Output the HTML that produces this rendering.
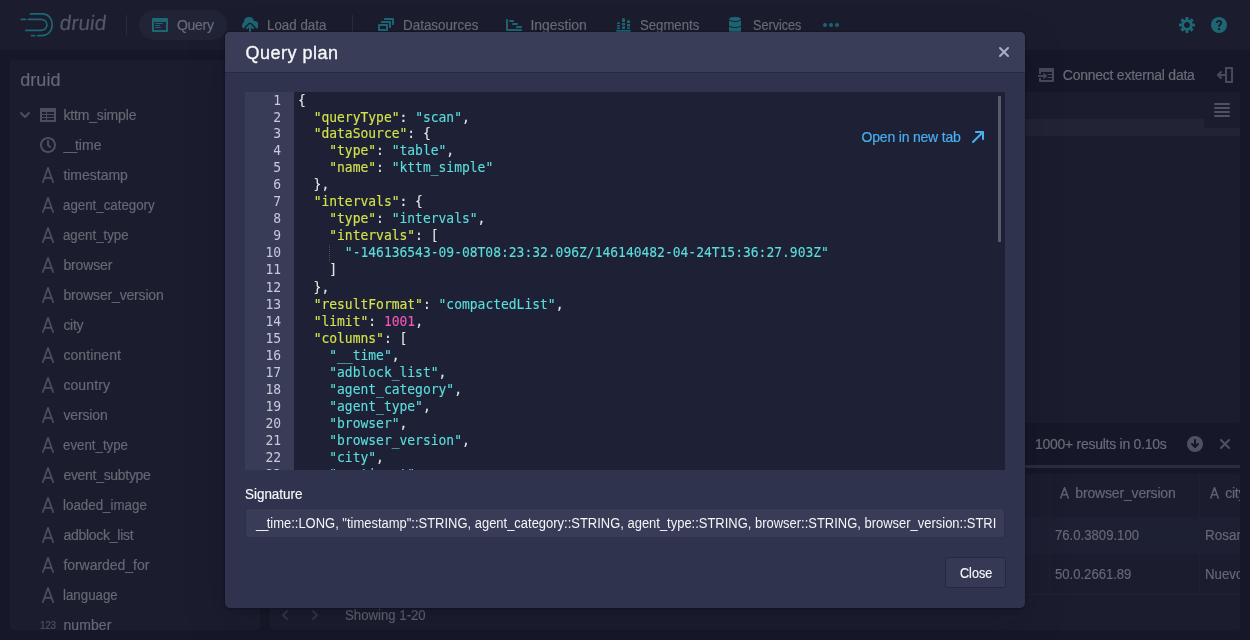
<!DOCTYPE html>
<html lang="en">
<head>
<meta charset="utf-8">
<title>Apache Druid</title>
<style>
*{box-sizing:border-box;margin:0;padding:0}
html,body{width:1250px;height:640px;overflow:hidden;background:#161829;font-family:"Liberation Sans",sans-serif;font-size:14px;color:#6c6e7c}
body{position:relative}
#app{position:absolute;left:0;top:0;width:1250px;height:640px;overflow:hidden;will-change:transform}
.abs{position:absolute}
.hdr{position:absolute;left:0;top:0;width:1250px;height:50px;background:#1b1c2e}
.t{position:absolute;font-family:"Liberation Sans",sans-serif;font-size:14px;line-height:18px;color:#6b6c78;white-space:nowrap;-webkit-text-stroke:0.18px}
.pill{position:absolute;left:139px;top:10px;width:88px;height:30px;border-radius:15px;background:#212337}
.vdiv{position:absolute;top:15px;width:1px;height:20px;background:#2a2c3f}
.panel{position:absolute;background:#1b1c2e;border-radius:3px}
.modal{position:absolute;left:225px;top:32px;width:800px;height:576px;background:#2f334d;border-radius:5px;overflow:hidden}
.mshadow{position:absolute;left:225px;top:32px;width:800px;height:576px;border-radius:5px;box-shadow:0 0 0 1px rgba(13,14,26,.25),0 2px 5px rgba(13,14,26,.35),0 14px 40px 4px rgba(13,14,26,.13)}
.mh{position:absolute;left:0;top:0;width:800px;height:41px;background:#3a3d58;border-bottom:1px solid #272a41}
.code{position:absolute;left:20px;top:60px;width:760px;height:378px;background:#1e2136;overflow:hidden;font-family:"DejaVu Sans Mono","Liberation Mono",monospace;font-size:13px;line-height:17px;letter-spacing:-0.02px}
.gutbg{position:absolute;left:0;top:0;width:49px;height:378px;background:#393c57}
.gut{position:absolute;left:0;top:-0.600px;width:49px;color:#c6cad9;text-align:right;padding-right:13px;white-space:pre;line-height:15.044px;transform:scaleY(1.13);transform-origin:0 0}
.src{position:absolute;left:53px;top:-0.600px;white-space:pre;color:#dcebe4;line-height:15.044px;transform:scaleY(1.13);transform-origin:0 0}
.k{color:#d2e34a}.s{color:#5bdedb}.n{color:#f656b4}
.src{-webkit-text-stroke:0.12px}
.guide{position:absolute;left:84px;top:153px;width:1px;height:17px;background:repeating-linear-gradient(#4a4d63 0 1px,transparent 1px 2px)}
.sb{position:absolute;left:753px;top:4px;width:3px;height:146px;background:#5a5b68}
.inp{position:absolute;left:20px;top:476px;width:760px;height:30px;background:#383c56;border:1px solid #2c3048;border-radius:3px}
.inp div{position:absolute;left:0;top:5px;width:750px;height:18px;overflow:hidden}
.inp div>span{position:absolute;left:10.13px;top:0;font-size:14px;line-height:18px;color:#f3f5f9;white-space:nowrap;transform-origin:0 0;transform:scaleX(0.9259)}
.btn{position:absolute;left:720px;top:525px;width:61px;height:31px;background:#353953;border:1px solid #252840;border-radius:3px}
.row1{position:absolute;left:0;top:43px;width:970px;height:37px;background:#1d1f32}
.cb{position:absolute;top:0;width:1px;height:120px;background:#1e2033}
</style>
</head>
<body>
<div id="app">
<!-- header -->
<div class="hdr">
  <div class="pill"></div>
  <div class="vdiv" style="left:126px"></div>
  <div class="vdiv" style="left:352px"></div>
  <svg class="abs" style="left:18px;top:10px" width="38" height="30" viewBox="0 0 38 30" fill="none" stroke="#1d6775" stroke-width="1.700" stroke-linecap="round"><path d="M12.300 3.900H24.500C30.500 3.900 34.200 8.800 34.200 14.700C34.200 20.800 29.800 25.700 24 25.700H19.700"/><path d="M13.400 25.700H16.800"/><path d="M3.300 9.400H7.500"/><path d="M10.200 9.400H23C26.500 9.400 28.900 11.800 28.900 14.900C28.900 18 26.300 20.400 23 20.400H7.800"/></svg>
  <div class="t" style="left:59.2px;top:10px;font-size:20.8px;line-height:26px;letter-spacing:0.03px;color:#555766;transform:skewX(-7deg);transform-origin:0 21px;">druid</div>
  <svg class="abs" style="left:152px;top:17px" width="16" height="16" viewBox="0 0 16 16" fill="#1d6775"><path fill-rule="evenodd" d="M3.5 7h7c.28 0 .5-.22.5-.5s-.22-.5-.5-.5h-7c-.28 0-.5.22-.5.5s.22.5.5.5zM15 1H1c-.55 0-1 .45-1 1v12c0 .55.45 1 1 1h14c.55 0 1-.45 1-1V2c0-.55-.45-1-1-1zm-1 12H2V5h12v8zM3.500 9h4c.28 0 .5-.22.5-.5S7.780 8 7.500 8h-4c-.28 0-.5.22-.5.5s.22.5.5.5zm0 2h5c.28 0 .5-.22.5-.5s-.22-.5-.5-.5h-5c-.28 0-.5.22-.5.5s.22.5.5.5z"/></svg>
  <div class="t" style="left:177px;top:16px;font-size:14px;line-height:18px;letter-spacing:-0.281px;">Query</div>
  <svg class="abs" style="left:242px;top:17px" width="16" height="16" viewBox="0 0 16 16" fill="#1d6775"><path fill-rule="evenodd" d="M8.710 7.290C8.530 7.110 8.280 7 8 7s-.53.110-.71.290l-3 3a1.003 1.003 0 001.420 1.420L7 10.410V15c0 .55.450 1 1 1s1-.45 1-1v-4.590l1.290 1.290c.18.190.43.300.71.300a1.003 1.003 0 00.710-1.710l-3-3zM12 4c-.03 0-.07 0-.1.010A5 5 0 002 5c0 .110.010.220.020.330A3.510 3.510 0 000 8.500c0 1.430.860 2.660 2.090 3.200.010-.88.360-1.690.960-2.320l2.990-2.990C6.400 6.030 6.900 5.800 7.450 5.800h1.100c.55 0 1.050.22 1.410.59l3 3c.6.6.95 1.430.96 2.350A4.002 4.002 0 0012 4z"/></svg>
  <div class="t" style="left:266.65px;top:16px;font-size:14px;line-height:18px;transform:scaleX(0.9529);transform-origin:0 0;">Load data</div>
  <svg class="abs" style="left:378px;top:17px" width="16" height="16" viewBox="0 0 16 16" fill="#1d6775"><path fill-rule="evenodd" d="M12 3.980H4c-.55 0-1 .45-1 1v1h8v5h1c.55 0 1-.45 1-1v-5c0-.55-.45-1-1-1zm3-3H7c-.55 0-1 .45-1 1v1h8v5h1c.55 0 1-.45 1-1v-5c0-.55-.45-1-1-1zm-6 6H1c-.55 0-1 .45-1 1v5c0 .55.45 1 1 1h8c.55 0 1-.45 1-1v-5c0-.55-.45-1-1-1zm-1 5H2v-3h6v3z"/></svg>
  <div class="t" style="left:402.64px;top:16px;font-size:14px;line-height:18px;transform:scaleX(0.9589);transform-origin:0 0;">Datasources</div>
  <svg class="abs" style="left:506px;top:17px" width="16" height="16" viewBox="0 0 16 16" fill="#1d6775"><path fill-rule="evenodd" d="M4 5h3c.55 0 1-.45 1-1s-.45-1-1-1H4c-.55 0-1 .45-1 1s.45 1 1 1zm3 1c-.55 0-1 .45-1 1s.45 1 1 1h4c.55 0 1-.45 1-1s-.45-1-1-1H7zm8 6H2V3c0-.55-.45-1-1-1s-1 .45-1 1v10c0 .55.450 1 1 1h14c.55 0 1-.45 1-1s-.45-1-1-1zm-4-3c-.55 0-1 .45-1 1s.45 1 1 1h4c.55 0 1-.45 1-1s-.45-1-1-1h-4z"/></svg>
  <div class="t" style="left:530.5px;top:16px;font-size:14px;line-height:18px;letter-spacing:-0.067px;">Ingestion</div>
  <svg class="abs" style="left:616px;top:17px" width="16" height="16" viewBox="0 0 16 16" fill="#1d6775"><path d="M1 6.500A1.500 1.500 0 014 6.500V7H1zM1 8h3v1.500H1zM1 10.500h3V12H1z"/><path d="M6 2.500A1.500 1.500 0 019 2.500V5H6zM6 6h3v2.500H6zM6 9.500h3V12H6z"/><path d="M11 4.500A1.500 1.500 0 0114 4.500V6H11zM11 7h3v2.500h-3zM11 10.500h3V12h-3z"/><rect x="0" y="13" width="15" height="2" rx="1"/></svg>
  <div class="t" style="left:639.8px;top:16px;font-size:14px;line-height:18px;transform:scaleX(0.9392);transform-origin:0 0;">Segments</div>
  <svg class="abs" style="left:727px;top:17px" width="16" height="16" viewBox="0 0 16 16" fill="#1d6775"><path fill-rule="evenodd" d="M8 4c3.310 0 6-.9 6-2s-2.690-2-6-2C4.680 0 2 .9 2 2s2.680 2 6 2zm-6-.48V8c0 1.100 2.690 2 6 2s6-.9 6-2V3.520C12.780 4.400 10.560 5 8 5s-4.780-.6-6-1.480zm0 6V14c0 1.100 2.690 2 6 2s6-.9 6-2V9.520C12.780 10.400 10.560 11 8 11s-4.780-.6-6-1.480z"/></svg>
  <div class="t" style="left:752.6px;top:16px;font-size:14px;line-height:18px;transform:scaleX(0.9016);transform-origin:0 0;">Services</div>
  <svg class="abs" style="left:823px;top:17px" width="16" height="16" viewBox="0 0 16 16" fill="#1d6775"><circle cx="2" cy="8" r="2"/><circle cx="8" cy="8" r="2"/><circle cx="14" cy="8" r="2"/></svg>
  <svg class="abs" style="left:1179px;top:17px" width="16" height="16" viewBox="0 0 16 16" fill="#1d6775"><path fill-rule="evenodd" d="M15.190 6.390h-1.850c-.11-.37-.27-.71-.45-1.040l1.360-1.360c.31-.31.310-.82 0-1.130l-1.130-1.130a.803.803 0 00-1.130 0l-1.360 1.360c-.33-.17-.67-.33-1.040-.44V.790c0-.44-.36-.8-.8-.8h-1.600c-.44 0-.8.360-.8.800v1.860c-.39.120-.75.280-1.100.47l-1.300-1.300c-.3-.3-.79-.3-1.090 0L1.820 2.910c-.3.300-.3.790 0 1.090l1.300 1.300c-.2.340-.36.700-.48 1.090H.8c-.44 0-.8.360-.8.800v1.600c0 .44.360.8.800.8h1.850c.11.370.27.710.45 1.040l-1.360 1.360c-.31.310-.31.820 0 1.130l1.130 1.130c.31.310.82.310 1.130 0l1.360-1.360c.33.180.67.330 1.040.440v1.860c0 .44.360.8.800.8h1.600c.44 0 .8-.36.800-.8v-1.860c.39-.12.750-.28 1.100-.47l1.300 1.300c.3.300.79.300 1.090 0l1.090-1.090c.3-.3.300-.79 0-1.090l-1.300-1.300c.19-.35.360-.71.480-1.100h1.850c.44 0 .8-.36.800-.8v-1.600a.816.816 0 00-.82-.79zM8 10.990c-1.660 0-3-1.340-3-3s1.340-3 3-3 3 1.340 3 3-1.340 3-3 3z"/></svg>
  <svg class="abs" style="left:1211px;top:17px" width="16" height="16" viewBox="0 0 16 16" fill="#1d6775"><circle cx="8" cy="8" r="8"/><path d="M5.900 6.100C5.900 4.600 6.900 3.900 8.100 3.900C9.400 3.900 10.200 4.700 10.200 5.800C10.200 7.500 8 7.600 8 9.700" fill="none" stroke="#1b1c2e" stroke-width="1.900"/><rect x="7" y="11" width="2" height="2" fill="#1b1c2e"/></svg>
</div>

<!-- sidebar -->
<div class="panel side" style="left:10px;top:60px;width:250px;height:570px;overflow:hidden">
  <div class="t" style="left:10.3px;top:8px;font-size:18px;line-height:24px;letter-spacing:0.021px;color:#676874;">druid</div>
  <svg class="abs" style="left:7px;top:47px" width="16" height="16" viewBox="0 0 16 16" fill="#4d4f60"><path d="M12 5c-.28 0-.53.110-.71.290L8 8.590l-3.290-3.300a1.003 1.003 0 00-1.420 1.420l4 4c.18.180.43.290.71.290s.53-.11.710-.29l4-4A1.003 1.003 0 0012 5z"/></svg>
  <svg class="abs" style="left:30px;top:47px" width="16" height="16" viewBox="0 0 16 16" fill="#4d4f60"><path fill-rule="evenodd" d="M15 1H1c-.55 0-1 .45-1 1v12c0 .55.450 1 1 1h14c.55 0 1-.45 1-1V2c0-.55-.45-1-1-1zM6 13H2v-2h4v2zm0-3H2V8h4v2zm0-3H2V5h4v2zm8 6H7v-2h7v2zm0-3H7V8h7v2zm0-3H7V5h7v2z"/></svg>
  <div class="t" style="left:53.4px;top:46px;font-size:14px;line-height:18px;letter-spacing:-0.16px;color:#676874;">kttm_simple</div>
  <div class="t" style="left:53.4px;top:76px;color:#676874"><span style="letter-spacing:-2px">__</span>time</div>
  <svg class="abs" style="left:30px;top:77px" width="16" height="16" viewBox="0 0 16 16" fill="#4d4f60"><path fill-rule="evenodd" d="M9 7.590V4c0-.55-.45-1-1-1s-1 .45-1 1v4c0 .28.110.53.290.71l2 2a1.003 1.003 0 001.420-1.420L9 7.590zM8 0C3.580 0 0 3.580 0 8s3.580 8 8 8 8-3.580 8-8-3.580-8-8-8zm0 14c-3.310 0-6-2.690-6-6s2.690-6 6-6 6 2.690 6 6-2.690 6-6 6z"/></svg>
  <div class="t" style="left:53.4px;top:106px;font-size:14px;line-height:18px;letter-spacing:-0.011px;color:#676874;">timestamp</div>
  <svg class="abs" style="left:32px;top:107px" width="12" height="16" viewBox="0 0 12 16" fill="none" stroke="#4d4f60" stroke-width="1.7" stroke-linecap="round" stroke-linejoin="round"><path d="M0.800 15.200L6 0.900L11.200 15.200M2.700 10.800H9.300"/></svg>
  <div class="t" style="left:53.4px;top:136px;font-size:14px;line-height:18px;transform:scaleX(0.9501);transform-origin:0 0;color:#676874;">agent_category</div>
  <svg class="abs" style="left:32px;top:137px" width="12" height="16" viewBox="0 0 12 16" fill="none" stroke="#4d4f60" stroke-width="1.7" stroke-linecap="round" stroke-linejoin="round"><path d="M0.800 15.200L6 0.900L11.200 15.200M2.700 10.800H9.300"/></svg>
  <div class="t" style="left:53.4px;top:166px;font-size:14px;line-height:18px;transform:scaleX(0.9468);transform-origin:0 0;color:#676874;">agent_type</div>
  <svg class="abs" style="left:32px;top:167px" width="12" height="16" viewBox="0 0 12 16" fill="none" stroke="#4d4f60" stroke-width="1.7" stroke-linecap="round" stroke-linejoin="round"><path d="M0.800 15.200L6 0.900L11.200 15.200M2.700 10.800H9.300"/></svg>
  <div class="t" style="left:53.4px;top:196px;font-size:14px;line-height:18px;letter-spacing:-0.138px;color:#676874;">browser</div>
  <svg class="abs" style="left:32px;top:197px" width="12" height="16" viewBox="0 0 12 16" fill="none" stroke="#4d4f60" stroke-width="1.7" stroke-linecap="round" stroke-linejoin="round"><path d="M0.800 15.200L6 0.900L11.200 15.200M2.700 10.800H9.300"/></svg>
  <div class="t" style="left:53.4px;top:226px;font-size:14px;line-height:18px;letter-spacing:-0.166px;color:#676874;">browser_version</div>
  <svg class="abs" style="left:32px;top:227px" width="12" height="16" viewBox="0 0 12 16" fill="none" stroke="#4d4f60" stroke-width="1.7" stroke-linecap="round" stroke-linejoin="round"><path d="M0.800 15.200L6 0.900L11.200 15.200M2.700 10.800H9.300"/></svg>
  <div class="t" style="left:53.4px;top:256px;font-size:14px;line-height:18px;letter-spacing:-0.3px;color:#676874;">city</div>
  <svg class="abs" style="left:32px;top:257px" width="12" height="16" viewBox="0 0 12 16" fill="none" stroke="#4d4f60" stroke-width="1.7" stroke-linecap="round" stroke-linejoin="round"><path d="M0.800 15.200L6 0.900L11.200 15.200M2.700 10.800H9.300"/></svg>
  <div class="t" style="left:53.4px;top:286px;font-size:14px;line-height:18px;letter-spacing:0.096px;color:#676874;">continent</div>
  <svg class="abs" style="left:32px;top:287px" width="12" height="16" viewBox="0 0 12 16" fill="none" stroke="#4d4f60" stroke-width="1.7" stroke-linecap="round" stroke-linejoin="round"><path d="M0.800 15.200L6 0.900L11.200 15.200M2.700 10.800H9.300"/></svg>
  <div class="t" style="left:53.4px;top:316px;font-size:14px;line-height:18px;letter-spacing:0.098px;color:#676874;">country</div>
  <svg class="abs" style="left:32px;top:317px" width="12" height="16" viewBox="0 0 12 16" fill="none" stroke="#4d4f60" stroke-width="1.7" stroke-linecap="round" stroke-linejoin="round"><path d="M0.800 15.200L6 0.900L11.200 15.200M2.700 10.800H9.300"/></svg>
  <div class="t" style="left:53.4px;top:346px;font-size:14px;line-height:18px;letter-spacing:-0.124px;color:#676874;">version</div>
  <svg class="abs" style="left:32px;top:347px" width="12" height="16" viewBox="0 0 12 16" fill="none" stroke="#4d4f60" stroke-width="1.7" stroke-linecap="round" stroke-linejoin="round"><path d="M0.800 15.200L6 0.900L11.200 15.200M2.700 10.800H9.300"/></svg>
  <div class="t" style="left:53.4px;top:376px;font-size:14px;line-height:18px;transform:scaleX(0.9489);transform-origin:0 0;color:#676874;">event_type</div>
  <svg class="abs" style="left:32px;top:377px" width="12" height="16" viewBox="0 0 12 16" fill="none" stroke="#4d4f60" stroke-width="1.7" stroke-linecap="round" stroke-linejoin="round"><path d="M0.800 15.200L6 0.900L11.200 15.200M2.700 10.800H9.300"/></svg>
  <div class="t" style="left:53.4px;top:406px;font-size:14px;line-height:18px;letter-spacing:-0.299px;color:#676874;">event_subtype</div>
  <svg class="abs" style="left:32px;top:407px" width="12" height="16" viewBox="0 0 12 16" fill="none" stroke="#4d4f60" stroke-width="1.7" stroke-linecap="round" stroke-linejoin="round"><path d="M0.800 15.200L6 0.900L11.200 15.200M2.700 10.800H9.300"/></svg>
  <div class="t" style="left:53.4px;top:436px;font-size:14px;line-height:18px;transform:scaleX(0.9527);transform-origin:0 0;color:#676874;">loaded_image</div>
  <svg class="abs" style="left:32px;top:437px" width="12" height="16" viewBox="0 0 12 16" fill="none" stroke="#4d4f60" stroke-width="1.7" stroke-linecap="round" stroke-linejoin="round"><path d="M0.800 15.200L6 0.900L11.200 15.200M2.700 10.800H9.300"/></svg>
  <div class="t" style="left:53.4px;top:466px;font-size:14px;line-height:18px;letter-spacing:-0.26px;color:#676874;">adblock_list</div>
  <svg class="abs" style="left:32px;top:467px" width="12" height="16" viewBox="0 0 12 16" fill="none" stroke="#4d4f60" stroke-width="1.7" stroke-linecap="round" stroke-linejoin="round"><path d="M0.800 15.200L6 0.900L11.200 15.200M2.700 10.800H9.300"/></svg>
  <div class="t" style="left:53.4px;top:496px;font-size:14px;line-height:18px;letter-spacing:-0.035px;color:#676874;">forwarded_for</div>
  <svg class="abs" style="left:32px;top:497px" width="12" height="16" viewBox="0 0 12 16" fill="none" stroke="#4d4f60" stroke-width="1.7" stroke-linecap="round" stroke-linejoin="round"><path d="M0.800 15.200L6 0.900L11.200 15.200M2.700 10.800H9.300"/></svg>
  <div class="t" style="left:53.4px;top:526px;font-size:14px;line-height:18px;transform:scaleX(0.9494);transform-origin:0 0;color:#676874;">language</div>
  <svg class="abs" style="left:32px;top:527px" width="12" height="16" viewBox="0 0 12 16" fill="none" stroke="#4d4f60" stroke-width="1.7" stroke-linecap="round" stroke-linejoin="round"><path d="M0.800 15.200L6 0.900L11.200 15.200M2.700 10.800H9.300"/></svg>
  <div class="t" style="left:53.4px;top:556px;font-size:14px;line-height:18px;letter-spacing:0.099px;color:#676874;">number</div>
  <div class="t" style="left:30px;top:557px;font-size:10px;letter-spacing:-0.3px;color:#4d4f60">123</div>
</div>

<!-- right side -->
<svg class="abs" style="left:1038px;top:67px" width="16" height="16" viewBox="0 0 16 16" fill="#484a5c"><path fill-rule="evenodd" d="M2 1h13a1 1 0 011 1v12a1 1 0 01-1 1H2a1 1 0 01-1-1v-3h2v2h11V5H3v2H1V2a1 1 0 011-1z"/><path d="M9.500 7H14v1H9.500zM9.500 10H14v1H9.500zM0 8h5.400V5.600L9.300 9l-3.900 3.400V10H0z"/></svg>
<div class="t" style="left:1062.8px;top:66px;font-size:14px;line-height:18px;letter-spacing:-0.245px;">Connect external data</div>
<svg class="abs" style="left:1217px;top:67px" width="16" height="16" viewBox="0 0 16 16" fill="#484a5c"><path fill-rule="evenodd" d="M9 0h6c.55 0 1 .45 1 1v14c0 .55-.45 1-1 1H9c-.55 0-1-.45-1-1V1c0-.55.450-1 1-1zm1 2v12h4V2h-4z"/><path d="M4.700 4.300a1.003 1.003 0 00-1.410 0l-3 3C.11 7.470 0 7.720 0 8s.11.530.29.710l3 3a1.003 1.003 0 001.420-1.420L3.410 9H8V7H3.410l1.290-1.290c.39-.39.39-1.020 0-1.410z"/></svg>
<div class="panel" style="left:270px;top:92px;width:970px;height:331px;overflow:hidden">
  <div class="abs" style="left:0;top:27px;width:970px;height:17px;background:#222436"></div>
  <div class="abs" style="left:934px;top:0;width:36px;height:36px;background:#1b1c2e;border-radius:0 0 0 4px"></div>
  <svg class="abs" style="left:944px;top:10px" width="16" height="16" viewBox="0 0 16 16" fill="#505264"><rect x="0" y="1" width="16" height="2" rx="1"/><rect x="0" y="5" width="16" height="2" rx="1"/><rect x="0" y="9" width="16" height="2" rx="1"/><rect x="0" y="13" width="16" height="2" rx="1"/></svg>
</div>
<div class="t" style="left:1034.9px;top:435px;font-size:14px;line-height:18px;letter-spacing:-0.26px;">1000+ results in 0.10s</div>
<svg class="abs" style="left:1187px;top:436px" width="16" height="16" viewBox="0 0 16 16" fill="#4f5162"><path fill-rule="evenodd" d="M8 0a8 8 0 100 16A8 8 0 008 0zm3.710 8.710l-3 3c-.18.180-.43.290-.71.290s-.53-.11-.71-.29l-3-3a1.003 1.003 0 011.420-1.420L7 8.590V4c0-.55.450-1 1-1s1 .45 1 1v4.590l1.290-1.290a1.003 1.003 0 011.420 1.410z"/></svg>
<svg class="abs" style="left:1217px;top:436px" width="16" height="16" viewBox="0 0 16 16" fill="#4f5162"><path d="M9.410 8l3.290-3.290c.19-.18.300-.43.300-.71a1.003 1.003 0 00-1.710-.71L8 6.590l-3.290-3.300a1.003 1.003 0 00-1.420 1.420L6.590 8 3.300 11.290c-.19.180-.3.430-.3.710a1.003 1.003 0 001.710.71L8 9.410l3.290 3.290c.18.190.43.300.71.300a1.003 1.003 0 00.710-1.710L9.410 8z"/></svg>
<div class="abs" style="left:270px;top:465px;width:970px;height:3px;background:#2a2d42"></div>
<div class="panel" style="left:270px;top:474px;width:970px;height:156px;overflow:hidden">
  <div class="row1"></div>
  <div class="abs" style="left:0;top:120px;width:970px;height:1px;background:#1f2135"></div>
  <div class="cb" style="left:779px"></div>
  <div class="cb" style="left:929px"></div>
  <svg class="abs" style="left:790px;top:13px" width="9" height="11.5" viewBox="0 0 12 16" fill="none" stroke="#5d5f6e" stroke-width="2.2" stroke-linecap="round" stroke-linejoin="round"><path d="M0.800 15.200L6 0.900L11.200 15.200M2.700 10.800H9.300"/></svg>
  <div class="t" style="left:805.3px;top:10px;font-size:14px;line-height:18px;letter-spacing:-0.159px;color:#676874;">browser_version</div>
  <svg class="abs" style="left:940px;top:13px" width="9" height="11.5" viewBox="0 0 12 16" fill="none" stroke="#5d5f6e" stroke-width="2.2" stroke-linecap="round" stroke-linejoin="round"><path d="M0.800 15.200L6 0.900L11.200 15.200M2.700 10.800H9.300"/></svg>
  <div class="t" style="left:955.2px;top:10px;font-size:14px;line-height:18px;letter-spacing:-0.233px;color:#676874;">city</div>
  <div class="t" style="left:785.3px;top:52px;font-size:14px;line-height:18px;transform:scaleX(0.9382);transform-origin:0 0;color:#676874;">76.0.3809.100</div>
  <div class="t" style="left:935.44px;top:52px;font-size:14px;line-height:18px;transform:scaleX(0.9609);transform-origin:0 0;color:#676874;">Rosario</div>
  <div class="t" style="left:785.3px;top:91px;font-size:14px;line-height:18px;transform:scaleX(0.9346);transform-origin:0 0;color:#676874;">50.0.2661.89</div>
  <div class="t" style="left:935.45px;top:91px;font-size:14px;line-height:18px;transform:scaleX(0.9476);transform-origin:0 0;color:#676874;">Nuevo Laredo</div>
  <svg class="abs" style="left:7px;top:133px" width="16" height="16" viewBox="0 0 16 16" fill="#34364a"><path d="M7.410 8l3.290-3.290c.19-.18.300-.43.300-.71a1.003 1.003 0 00-1.710-.71l-4 4C5.110 7.470 5 7.720 5 8c0 .28.110.53.290.71l4 4a1.003 1.003 0 001.420-1.420L7.410 8z"/></svg>
  <svg class="abs" style="left:37px;top:133px" width="16" height="16" viewBox="0 0 16 16" fill="#34364a"><path d="M10.710 7.290l-4-4a1.003 1.003 0 00-1.420 1.420L8.590 8 5.300 11.290c-.19.180-.3.430-.3.710a1.003 1.003 0 001.710.71l4-4c.18-.18.290-.43.290-.71 0-.28-.11-.53-.29-.71z"/></svg>
  <div class="t" style="left:75.2px;top:132px;font-size:14px;line-height:18px;transform:scaleX(0.9426);transform-origin:0 0;color:#5f6170;">Showing 1-20</div>
</div>

<!-- modal -->
<div class="mshadow"></div>
<div class="modal">
  <div class="mh"><div class="t" style="left:20.4px;top:9px;font-size:18px;line-height:24px;letter-spacing:0.507px;color:#f5f7fa;-webkit-text-stroke:0.35px;">Query plan</div><svg class="abs" style="left:771px;top:12px" width="16" height="16" viewBox="0 0 16 16" fill="#abafc4"><path d="M9.410 8l3.290-3.290c.19-.18.300-.43.300-.71a1.003 1.003 0 00-1.710-.71L8 6.590l-3.290-3.300a1.003 1.003 0 00-1.420 1.420L6.590 8 3.300 11.290c-.19.180-.3.430-.3.710a1.003 1.003 0 001.710.71L8 9.410l3.290 3.290c.18.190.43.300.71.300a1.003 1.003 0 00.710-1.710L9.410 8z"/></svg></div>
  <div class="code">
<div class="gutbg"></div><div class="gut">1
2
3
4
5
6
7
8
9
10
11
12
13
14
15
16
17
18
19
20
21
22
23</div>
<div class="src">{
  <span class="k">"queryType"</span>: <span class="s">"scan"</span>,
  <span class="k">"dataSource"</span>: {
    <span class="k">"type"</span>: <span class="s">"table"</span>,
    <span class="k">"name"</span>: <span class="s">"kttm_simple"</span>
  },
  <span class="k">"intervals"</span>: {
    <span class="k">"type"</span>: <span class="s">"intervals"</span>,
    <span class="k">"intervals"</span>: [
      <span class="s">"-146136543-09-08T08:23:32.096Z/146140482-04-24T15:36:27.903Z"</span>
    ]
  },
  <span class="k">"resultFormat"</span>: <span class="s">"compactedList"</span>,
  <span class="k">"limit"</span>: <span class="n">1001</span>,
  <span class="k">"columns"</span>: [
    <span class="s">"__time"</span>,
    <span class="s">"adblock_list"</span>,
    <span class="s">"agent_category"</span>,
    <span class="s">"agent_type"</span>,
    <span class="s">"browser"</span>,
    <span class="s">"browser_version"</span>,
    <span class="s">"city"</span>,
    <span class="s">"continent"</span>,</div>
    <div class="guide"></div>
    <div class="sb"></div>
    <div class="t" style="left:616.6px;top:36px;font-size:14px;line-height:18px;letter-spacing:-0.198px;color:#48aff0;">Open in new tab</div>
    <svg class="abs" style="left:725px;top:37px" width="16" height="16" viewBox="0 0 16 16" fill="#48aff0"><path d="M13 2H6c-.55 0-1 .45-1 1s.45 1 1 1h4.590L2.290 12.290c-.18.180-.29.430-.29.710a1.003 1.003 0 001.710.71L12 5.410V10c0 .55.450 1 1 1s1-.45 1-1V3c0-.55-.45-1-1-1z"/></svg>
  </div>
  <div class="t" style="left:20.0px;top:453px;font-size:14px;line-height:18px;transform:scaleX(0.9577);transform-origin:0 0;color:#f5f7fa;">Signature</div>
  <div class="inp"><div><span><span style="position:static;letter-spacing:-2px;transform:none">__</span>time::LONG, "timestamp"::STRING, agent_category::STRING, agent_type::STRING, browser::STRING, browser_version::STRING, city::STRING, continent::STRING</span></div></div>
  <div class="btn"></div>
  <div class="t" style="left:734.5px;top:532px;font-size:14px;line-height:18px;transform:scaleX(0.8998);transform-origin:0 0;color:#f5f7fa;">Close</div>
</div>
</div>
</body>
</html>
